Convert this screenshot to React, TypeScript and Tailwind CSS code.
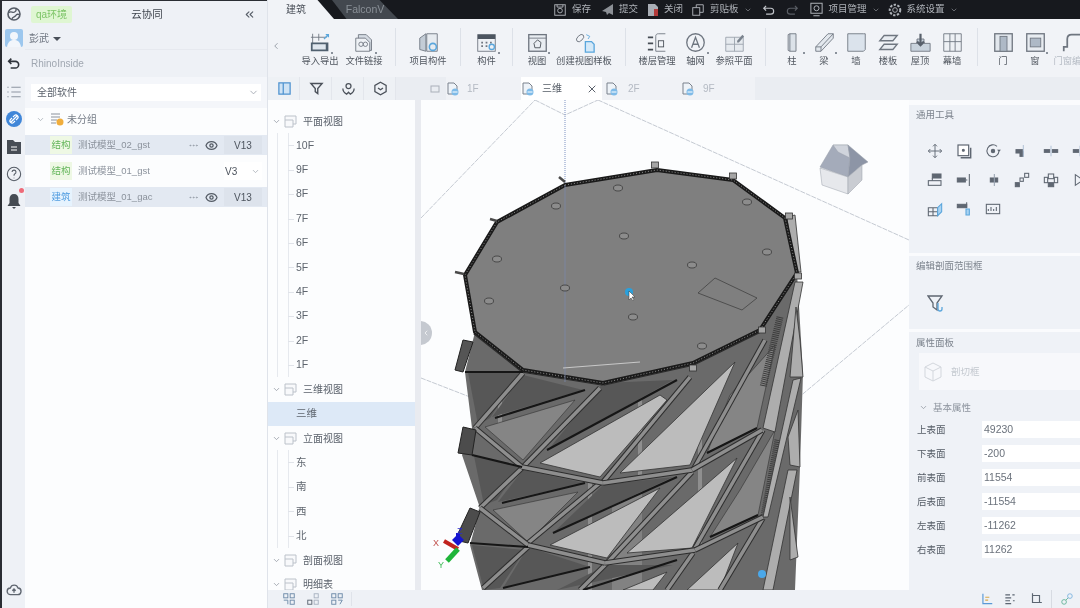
import React from "react";
import { ChevronDown, ChevronLeft, ChevronsLeft, Eye, MoreHorizontal, X } from "lucide-react";

const Ico = ({ s = 16, children, className = "" }: { s?: number; children: React.ReactNode; className?: string }) => (
  <svg width={s} height={s} viewBox="0 0 24 24" fill="none" stroke="currentColor" strokeWidth="1.6" className={className}>
    {children}
  </svg>
);

const BLUE = "#5aa6dc";

const railIcons: { y: number; el: React.ReactNode }[] = [
  { y: 5, el: <Ico className="text-[#555c66]"><circle cx="12" cy="12" r="9" strokeWidth="2.4" /><path d="M4 10c4-3 6 1 9-1s2-5 2-5M9 20c0-4 5-3 6-6s5-1 5-1" strokeWidth="2" /></Ico> },
  {
    y: 28,
    el: (
      <svg width="18" height="18" viewBox="0 0 18 18">
        <rect width="18" height="18" rx="2" fill="#9cc7ee" />
        <circle cx="9" cy="7" r="4" fill="#f2f6fb" />
        <path d="M2 18c1-6 4-7 7-7s6 1 7 7z" fill="#f2f6fb" />
      </svg>
    ),
  },
  { y: 55, el: <Ico className="text-[#2f343b]"><path d="M8 4 4 8l4 4M4 8h10a5 5 0 0 1 0 10H7" strokeWidth="2.4" /></Ico> },
  { y: 83, el: <Ico className="text-[#8d95a1]"><path d="M8 5h14M8 12h14M8 19h14M2 5h2M2 12h2M2 19h2" /></Ico> },
  {
    y: 110,
    el: (
      <svg width="16" height="16" viewBox="0 0 16 16">
        <circle cx="8" cy="8" r="8" fill="#3f86d8" />
        <path d="M5 11l6-6M6 7 4.600 8.400a2 2 0 0 0 3 3L9 10M7 6l1.400-1.400a2 2 0 0 1 3 3L10 9" stroke="#fff" fill="none" strokeWidth="1.200" />
      </svg>
    ),
  },
  {
    y: 138,
    el: (
      <svg width="16" height="16" viewBox="0 0 16 16">
        <path d="M1 1h6l2 2h6v12H1z" fill="#474d55" />
        <path d="M5 8h6M5 11h6" stroke="#fff" />
      </svg>
    ),
  },
  { y: 165, el: <Ico className="text-[#555c66]"><circle cx="12" cy="12" r="10" /><path d="M9 9a3 3 0 1 1 4 3c-1 .6-1 1-1 2.500M12 17.500v1" /></Ico> },
  {
    y: 192,
    el: (
      <span className="relative block">
        <svg width="16" height="16" viewBox="0 0 16 16">
          <path d="M8 1c3 0 4.500 2 4.500 5v4l2 3h-13l2-3V6C3.500 3 5 1 8 1zM6 14h4l-2 2z" fill="#454b53" />
        </svg>
        <span className="absolute -right-[2px] -top-[5px] h-[5px] w-[5px] rounded-full bg-[#ee6a78]" />
      </span>
    ),
  },
];

const Rail = () => (
  <div className="relative h-full w-[25px] shrink-0 border-l-2 border-t border-[#2a2d33] bg-[#eef1f6]">
    {railIcons.map((r, i) => (
      <div key={i} className="flex justify-center" style={{ position: "absolute", top: r.y, left: 0, right: 0 }}>
        {r.el}
      </div>
    ))}
    <div className="absolute bottom-[10px] left-0 right-0 flex justify-center text-[#5f6670]">
      <Ico>
        <path d="M7 19a5 5 0 0 1-.5-10A6 6 0 0 1 18 9a5 5 0 0 1-1 10z" strokeWidth="2" />
        <path d="M12 16v-5M9.500 13l2.500-2.500 2.500 2.500" strokeWidth="2" />
      </Ico>
    </div>
  </div>
);

const ModelRow = ({ tag, name, selected, ver, blue }: { tag: string; name: string; selected?: boolean; ver: string; blue?: boolean }) => (
  <div className={`flex h-[20px] items-center pl-[25px] pr-[5px] text-[9.500px] ${selected ? "bg-[#e3e9f2]" : ""}`}>
    <span className={`flex h-[18px] w-[22px] items-center justify-center ${blue ? "bg-[#e6f3fe] text-[#4f9ce0]" : "bg-[#eef8e4] text-[#63b55a]"}`}>{tag}</span>
    <span className="ml-[6px] text-[#8b929c]">{name}</span>
    <div className="flex-1" />
    {selected ? (
      <>
        <MoreHorizontal size={11} className="text-[#98a0ab]" />
        <Eye size={13} strokeWidth={2.4} className="ml-[6px] text-[#555c66]" />
        <span className="ml-[6px] flex h-[18px] w-[38px] items-center justify-center bg-[#dde3ec] text-[10px] text-[#4d545e]">{ver}</span>
      </>
    ) : (
      <span className="flex h-[18px] w-[38px] items-center justify-between bg-white pl-[1px] pr-[2px] text-[10px] text-[#4d545e]">
        {ver}
        <ChevronDown size={9} className="text-[#a3a9b2]" />
      </span>
    )}
  </div>
);

const LeftPanel = () => (
  <div className="flex h-full w-[243px] shrink-0 flex-col border-r border-[#dfe3ea] bg-[#fcfdfe] text-[10px]">
    <div className="border-t border-[#2a2d33] bg-[#eef1f6]">
      <div className="flex h-[27px] items-center pl-[6px] pr-[11px]">
        <span className="flex h-[17px] w-[41px] items-center justify-center rounded-[2px] bg-[#dff6d2] text-[#7cc466]">qa环境</span>
        <span className="flex-1 pr-[21px] text-center text-[10.500px] text-[#3f454e]">云协同</span>
        <ChevronsLeft size={13} className="text-[#565d67]" />
      </div>
      <div className="flex h-[21px] items-center gap-[4px] pl-[4px] text-[#6e7580]">
        彭武
        <span className="h-0 w-0 border-x-[4px] border-t-[4px] border-x-transparent border-t-[#4a5059]" />
      </div>
      <div className="flex h-[28px] items-center border-t border-[#e6e9ef] pl-[6px] text-[#a0a7b1]">RhinoInside</div>
    </div>
    <div className="bg-[#f4f6fa] px-[6px] py-[7px]">
      <div className="flex h-[17px] items-center justify-between bg-white pl-[6px] pr-[2px] text-[#5d646e]">
        全部软件
        <ChevronDown size={11} className="text-[#a3a9b2]" />
      </div>
    </div>
    <div className="flex h-[27px] items-center pb-[5px] pl-[11px] text-[10px] text-[#767d88]">
      <ChevronDown size={9} className="text-[#a3a9b2]" />
      <svg width="14" height="14" viewBox="0 0 14 14" className="ml-[5px]">
        <path d="M1 2h9M1 5h9M1 8h6M1 11h5" stroke="#8b929c" />
        <circle cx="10" cy="10" r="3.500" fill="#f0ad3c" />
      </svg>
      <span className="ml-[3px]">未分组</span>
    </div>
    <ModelRow tag="结构" name="测试模型_02_gst" selected ver="V13" />
    <div className="h-[6px]" />
    <ModelRow tag="结构" name="测试模型_01_gst" ver="V3" />
    <div className="h-[6px]" />
    <ModelRow tag="建筑" name="测试模型_01_gac" selected blue ver="V13" />
  </div>
);

const RibbonIcon = ({ kind }: { kind: string }) => {
  const d = "#6f7680";
  const l = "#d5dbe3";
  const common = { width: 21, height: 21, viewBox: "0 0 24 24", fill: "none" as const };
  switch (kind) {
    case "cad":
      return (
        <svg {...common}>
          <path d="M3 2v12M1 6h18M10 2v8" stroke={d} />
          <path d="M16 8l5-5M18 3h3v3" stroke={BLUE} strokeWidth="1.500" />
          <rect x="1" y="12" width="20" height="10" fill="#50606f" />
          <rect x="3" y="14" width="15" height="6" fill="#dfe6ee" />
        </svg>
      );
    case "link":
      return (
        <svg {...common}>
          <path d="M5 3h9l6 6v12H5z" fill={l} stroke={d} />
          <path d="M2 7h11l5 5v10H2z" fill="#eef1f5" stroke={d} />
          <circle cx="8" cy="14" r="2.500" stroke={d} />
          <circle cx="13" cy="14" r="2.500" stroke={d} />
        </svg>
      );
    case "proj":
      return (
        <svg {...common}>
          <path d="M2 7 9 2v20l-7-2z" fill="#c3ccd6" stroke={d} />
          <path d="M10 2h12v20H10z" fill="#e7ebf0" stroke={d} />
          <circle cx="17" cy="17" r="4" stroke={BLUE} strokeWidth="1.800" />
        </svg>
      );
    case "comp":
      return (
        <svg {...common}>
          <rect x="2" y="3" width="20" height="19" fill="#eef1f5" stroke={d} />
          <rect x="2" y="3" width="20" height="5" fill="#4c5560" />
          <path d="M6 12h2M11 12h2M16 12h2M6 16h2M11 16h2" stroke={d} strokeWidth="2" />
          <circle cx="18" cy="17" r="3" stroke={BLUE} strokeWidth="1.500" />
        </svg>
      );
    case "view":
      return (
        <svg {...common}>
          <rect x="2" y="3" width="20" height="19" fill="#e9edf2" stroke={d} strokeWidth="1.500" />
          <path d="M2 7h20" stroke={d} />
          <path d="M8 13l4-4 4 3-1 6H9z" stroke="#474d55" />
        </svg>
      );
    case "tpl":
      return (
        <svg {...common}>
          <ellipse cx="7" cy="7" rx="5" ry="3" stroke={d} transform="rotate(-45 7 7)" />
          <path d="M13 11h7l3 3v9H13z" fill="#d5e9f8" stroke={BLUE} strokeWidth="1.500" />
          <path d="M14 3l4 2-2 3" stroke={BLUE} />
        </svg>
      );
    case "floor":
      return (
        <svg {...common}>
          <path d="M10 5c0-2 1-3 3-3h8M10 5v17h11" stroke={d} />
          <path d="M1 6h6M1 13h6M1 20h6" stroke="#474d55" strokeWidth="2" />
          <rect x="13" y="10" width="6" height="7" stroke="#474d55" />
        </svg>
      );
    case "axis":
      return (
        <svg {...common}>
          <circle cx="12" cy="12" r="10" stroke={d} strokeWidth="1.500" />
          <path d="M7.500 18 12 6l4.500 12M9 14h6" stroke={d} strokeWidth="1.500" />
        </svg>
      );
    case "ref":
      return (
        <svg {...common}>
          <path d="M2 6h20v16H2zM12 6v16M2 14h20" fill="#e6eaef" stroke="#99a1ac" />
          <path d="M15 10l6-7 2 2-6 7h-2z" fill="#7a828d" />
        </svg>
      );
    case "col":
      return (
        <svg {...common}>
          <path d="M7 3l2-1h7v20H9l-2-1z" fill="#dce2e9" stroke={d} />
          <path d="M9 2v20" stroke={d} />
        </svg>
      );
    case "beam":
      return (
        <svg {...common}>
          <path d="M2 17 16 2h6v5L8 22H2z" fill="#e3e8ee" stroke={d} />
          <path d="M2 17h6v5M8 17 22 2" stroke={d} />
        </svg>
      );
    case "wall":
      return (
        <svg {...common}>
          <path d="M2 2h18l2 0v18l-2 2H2z" fill="#dbe3ec" stroke={d} />
        </svg>
      );
    case "slab":
      return (
        <svg {...common}>
          <path d="M7 4h15l-5 6H2zM7 14h15l-5 6H2z" fill="#e8ecf1" stroke={d} strokeWidth="1.500" />
        </svg>
      );
    case "roof":
      return (
        <svg {...common}>
          <path d="M1 13h7v-5h8v5h7v9H1z" fill="#c9d3dd" stroke={d} />
          <path d="M12 2v13M8 11l4 4 4-4" stroke="#58606b" strokeWidth="2.500" />
        </svg>
      );
    case "curtain":
      return (
        <svg {...common}>
          <path d="M2 2h20v20H2zM9 2v20M15 2v20M2 11h20" fill="#eef1f5" stroke={d} />
        </svg>
      );
    case "door":
      return (
        <svg {...common}>
          <rect x="2" y="2" width="20" height="20" fill="#e2e7ed" stroke={d} strokeWidth="1.500" />
          <rect x="8" y="5" width="8" height="17" fill="#aeb9c6" stroke={d} />
        </svg>
      );
    case "win":
      return (
        <svg {...common}>
          <rect x="2" y="2" width="20" height="20" fill="#e8ecf1" stroke={d} strokeWidth="1.500" />
          <rect x="6" y="7" width="12" height="10" fill="#aeb9c6" stroke={d} />
        </svg>
      );
    default:
      return (
        <svg {...common}>
          <path d="M2 22v-5h4V8c0-4 3-5 5-5h12" stroke={d} strokeWidth="2" />
        </svg>
      );
  }
};

const ribbon: ({ sep: number; mr?: number } | { k: string; t: string; w: number; corner?: boolean; dim?: boolean })[] = [
  { k: "cad", t: "导入导出", w: 44, corner: true },
  { k: "link", t: "文件链接", w: 44, corner: true },
  { sep: 9 },
  { k: "proj", t: "项目构件", w: 64 },
  { sep: 0 },
  { k: "comp", t: "构件", w: 51, corner: true },
  { sep: 0 },
  { k: "view", t: "视图", w: 48, corner: true },
  { k: "tpl", t: "创建视图样板", w: 46 },
  { sep: 18 },
  { k: "floor", t: "楼层管理", w: 62 },
  { k: "axis", t: "轴网", w: 15, corner: true },
  { k: "ref", t: "参照平面", w: 62 },
  { sep: 0, mr: 10 },
  { k: "col", t: "柱", w: 32, corner: true },
  { k: "beam", t: "梁", w: 32, corner: true },
  { k: "wall", t: "墙", w: 32 },
  { k: "slab", t: "楼板", w: 32 },
  { k: "roof", t: "屋顶", w: 32 },
  { k: "curtain", t: "幕墙", w: 32 },
  { sep: 9, mr: 9 },
  { k: "door", t: "门", w: 32 },
  { k: "win", t: "窗", w: 32, corner: true },
  { k: "dw", t: "门窗编号", w: 42, dim: true },
];

const Ribbon = () => (
  <div className="flex h-[58px] items-start bg-[#f1f3f7]">
    <div className="flex w-[30px] shrink-0 justify-center pr-[14px] pt-[22px]">
      <ChevronLeft size={10} className="text-[#8a919b]" />
    </div>
    {ribbon.map((it, i) =>
      "sep" in it ? (
        <div key={i} className="mt-[9px] h-[38px] w-px shrink-0 bg-[#dde1e8]" style={{ marginLeft: it.sep, marginRight: it.mr ?? 0 }} />
      ) : (
        <div key={i} className="relative flex shrink-0 flex-col items-center whitespace-nowrap pt-[13px]" style={{ width: it.w }}>
          <RibbonIcon kind={it.k} />
          <span className={`mt-[1px] text-[9.300px] leading-[14px] ${it.dim ? "text-[#b5bbc4]" : "text-[#50565f]"}`}>{it.t}</span>
          {it.corner && <span className="absolute left-[calc(50%+11px)] top-[33px] h-[2px] w-[2px] bg-[#8a919b]" />}
        </div>
      ),
    )}
  </div>
);

const Menu = ({ ml, icon, t, arrow }: { ml: number; icon: React.ReactNode; t?: string; arrow?: boolean }) => (
  <div className="flex shrink-0 items-center gap-[5px] text-[9.500px] text-[#aeb2b8]" style={{ marginLeft: ml }}>
    {icon}
    {t && <span>{t}</span>}
    {arrow && <ChevronDown size={8} className="text-[#8c9096]" />}
  </div>
);

const TopBar = () => (
  <div className="flex h-[19px] items-center overflow-hidden bg-[#17191e]">
    <div className="flex h-[19px] w-[66px] shrink-0 items-center bg-[#f1f3f7] pl-[18px] text-[10px] text-[#4b515a] [clip-path:polygon(0_0,75%_0,100%_100%,0_100%)]">建筑</div>
    <div className="-ml-[2px] flex h-[19px] w-[66px] shrink-0 items-center justify-center bg-[#43484f] text-[10.500px] text-[#8a9097] [clip-path:polygon(0_0,72%_0,100%_100%,22%_100%)]">FalconV</div>
    <Menu ml={155} icon={<Ico s={14}><rect x="3" y="3" width="18" height="18" /><circle cx="12" cy="13" r="4" /><path d="M7 3v4h10V3" /></Ico>} t="保存" />
    <Menu ml={10} icon={<svg width="13" height="13" viewBox="0 0 13 13"><path d="M1 8 12 1v11L8 10 6 12 5 9z" fill="#8c9096" /></svg>} t="提交" />
    <Menu ml={9} icon={<svg width="12" height="14" viewBox="0 0 12 14"><path d="M1 1h7l3 3v9H1z" fill="#a8adb4" /><path d="M7 6h4v7H7z" fill="#b33b3b" /></svg>} t="关闭" />
    <Menu ml={8} icon={<Ico s={14}><rect x="3" y="8" width="12" height="13" /><path d="M9 8V3h12v13h-6" /></Ico>} t="剪贴板" arrow />
    <Menu ml={10} icon={<Ico s={14} className="text-[#c2c5ca]"><path d="M7 5 3 9l4 4M3 9h12a5 5 0 0 1 0 10H7" strokeWidth="2" /></Ico>} />
    <Menu ml={9} icon={<Ico s={14} className="text-[#5a5e65]"><path d="M17 5l4 4-4 4M21 9H9a5 5 0 0 0 0 10h8" strokeWidth="2" /></Ico>} />
    <Menu ml={10} icon={<Ico s={15}><rect x="3" y="2" width="18" height="16" /><circle cx="12" cy="10" r="4" /><path d="M7 22h10" /></Ico>} t="项目管理" arrow />
    <Menu ml={8} icon={<Ico s={14}><circle cx="12" cy="12" r="4" /><circle cx="12" cy="12" r="9" strokeDasharray="4 2.500" strokeWidth="3.500" /></Ico>} t="系统设置" arrow />
  </div>
);

const TabIcon = () => (
  <svg width="14" height="14" viewBox="0 0 14 14" className="shrink-0">
    <path d="M2 1h6l3 3v8H2z" fill="#eef3f8" stroke="#7a828d" />
    <circle cx="9" cy="10" r="3.500" fill="#7fbbe8" />
    <path d="M6.500 10h5" stroke="#fff" />
  </svg>
);

const viewTabs = [
  { t: "1F", w: 75, pl: 0, gap: 7 },
  { t: "三维", w: 81, pl: 0, gap: 7, active: true },
  { t: "2F", w: 73, pl: 3, gap: 9 },
  { t: "9F", w: 80, pl: 6, gap: 8 },
];

const TabRow = () => (
  <div className="flex h-[23px] bg-[#eaedf2]">
    <div className="flex w-[147px] shrink-0">
      {[
        <Ico s={15} className="text-[#4f93cf]" key="a"><rect x="3" y="3" width="18" height="18" fill="#cfe3f5" strokeWidth="2" /><path d="M10 3v18" strokeWidth="2" /></Ico>,
        <Ico s={15} className="text-[#4b515a]" key="b"><path d="M3 4h18l-7 8v8l-4-3v-5z" strokeWidth="2.200" /></Ico>,
        <Ico s={15} className="text-[#4b515a]" key="c"><circle cx="12" cy="8" r="4" strokeWidth="2" /><path d="M3 12c0 6 4 8 6 9l3-3 3 3c2-1 6-3 6-9" strokeWidth="2" /></Ico>,
        <Ico s={15} className="text-[#4b515a]" key="d"><path d="M12 2l9 5v10l-9 5-9-5V7z" strokeWidth="2" /><path d="M8 11l4 3 4-3" strokeWidth="2" /></Ico>,
      ].map((el, i) => (
        <div key={i} className="flex w-[32px] items-center justify-center border-r border-[#e3e6ec] bg-[#eef1f5] pl-[2px]">{el}</div>
      ))}
    </div>
    <div className="flex w-[6px] shrink-0" />
    <div className="flex w-[25px] shrink-0 items-center justify-center pl-[2px]">
      <svg width="10" height="10" viewBox="0 0 10 10"><rect x="1" y="2" width="8" height="6" fill="none" stroke="#aab0b9" /></svg>
    </div>
    {viewTabs.map((t) => (
      <div key={t.t} className={`flex h-[23px] shrink-0 items-center text-[10px] ${t.active ? "bg-white text-[#555c66]" : "bg-[#f0f2f6] text-[#b4bac3]"}`} style={{ width: t.w, paddingLeft: t.pl }}>
        <TabIcon />
        <span style={{ marginLeft: t.gap }}>{t.t}</span>
        {t.active && <X size={12} className="ml-auto mr-[4px] text-[#5a616b]" />}
      </div>
    ))}
    <div className="flex-1" />
  </div>
);

const floors = ["10F", "9F", "8F", "7F", "6F", "5F", "4F", "3F", "2F", "1F"];

const TreeGroup = ({ t }: { t: string }) => (
  <div className="relative flex h-[24.400px] items-center pl-[4px] text-[10px] text-[#5b626c]">
    <ChevronDown size={9} className="text-[#8f96a0]" />
    <svg width="13" height="13" viewBox="0 0 13 13" className="ml-[3px] shrink-0">
      <path d="M1 1h11v8H9v3H1zM1 5h8v4" fill="#f8f9fb" stroke="#bcc2ca" />
    </svg>
    <span className="ml-[6px]">{t}</span>
  </div>
);

const TreeLeaf = ({ t, selected }: { t: string; selected?: boolean }) => (
  <div className={`relative flex h-[24.400px] items-center pl-[28px] text-[10.500px] text-[#5f666f] ${selected ? "bg-[#dde9f7]" : ""}`}>
    {!selected && <span className="absolute bottom-0 left-[9px] top-0 w-px bg-[#e6e9ee]" />}
    {!selected && <span className="absolute bottom-0 left-[20px] top-0 w-px bg-[#e6e9ee]" />}
    {!selected && <span className="absolute left-[20px] top-[12px] h-px w-[6px] bg-[#e0e3e9]" />}
    {t}
  </div>
);

const Tree = () => (
  <div className="relative h-full w-[147px] shrink-0 overflow-hidden bg-[#fcfdfe] pt-[9px]">
    <TreeGroup t="平面视图" />
    {floors.map((f) => <TreeLeaf key={f} t={f} />)}
    <TreeGroup t="三维视图" />
    <TreeLeaf t="三维" selected />
    <TreeGroup t="立面视图" />
    {["东", "南", "西", "北"].map((f) => <TreeLeaf key={f} t={f} />)}
    <TreeGroup t="剖面视图" />
    <TreeGroup t="明细表" />
  </div>
);

const tops = "565,185 657,170 733,180 785,218 797,273 760,330 693,363 603,383 523,370 475,332 465,275 497,222";
const holes: [number, number][] = [[618, 188], [556, 206], [624, 236], [497, 259], [489, 301], [565, 288], [692, 265], [767, 252], [633, 317], [702, 346], [747, 202]];
const light = [
  "540,463 660,395 667,400 600,477",
  "620,473 735,362 690,465",
  "550,545 660,488 607,558",
  "627,553 737,458 692,548",
  "687,590 738,543 720,590",
  "623,590 667,572 653,590",
];
const mid = [
  "485,427 575,400 523,460",
  "493,510 578,492 528,542",
  "707,453 757,428 775,345 730,395",
  "710,537 758,515 775,430 740,490",
];
const darkPanels = [
  "492,417 583,390 523,375",
  "498,502 585,483 523,470",
  "503,588 590,567 528,547",
  "548,450 673,380 603,383",
  "553,533 673,477 603,485",
  "557,590 673,565 607,565",
  "468,372 520,372 490,418 478,425",
  "474,456 520,467 497,500 484,505",
  "472,545 525,550 500,588 484,590",
];
const struts: [number, number, number, number][] = [
  [475, 428, 523, 373], [523, 467, 600, 388], [603, 482, 690, 377], [693, 470, 765, 340],
  [480, 508, 522, 468], [528, 543, 600, 483], [607, 563, 692, 472], [695, 548, 763, 430],
  [483, 588, 528, 547], [580, 590, 607, 563], [667, 590, 693, 553], [720, 590, 763, 518],
  [475, 332, 523, 370], [523, 370, 603, 383], [603, 383, 693, 363], [693, 363, 760, 330],
  [475, 428, 522, 467], [522, 467, 603, 483], [603, 483, 692, 470], [692, 470, 762, 430],
  [480, 508, 528, 545], [528, 545, 605, 563], [605, 563, 695, 550], [695, 550, 763, 517],
];
const blacks: [number, number, number, number][] = [
  [495, 418, 585, 390], [502, 503, 585, 483], [503, 588, 590, 567], [547, 450, 677, 380],
  [553, 533, 677, 477], [465, 372, 523, 372], [472, 455, 522, 467], [470, 543, 528, 547],
  [707, 453, 757, 428], [710, 537, 758, 515], [583, 590, 677, 560],
];
const strips = [
  "787,217 795,215 801,272 793,272",
  "795,282 803,282 775,432 763,428",
  "796,307 800,340 803,377 790,377",
  "793,380 801,378 768,517 763,517",
  "798,410 800,467 790,465 788,437",
  "788,470 797,470 773,590 763,590",
  "790,497 798,557 790,560",
];
const knobs: [number, number][] = [[655, 165], [733, 176], [789, 216], [798, 276], [762, 330], [693, 368]];
const prongs: [number, number, number, number][] = [[565, 182, 559, 177], [497, 221, 490, 219], [464, 274, 455, 272]];

const Model = () => (
  <svg viewBox="421 100 488 490" className="absolute inset-0 h-full w-full">
    <g stroke="#b6bcc6" strokeWidth="0.800" fill="none">
      <path d="M421 218 535 100M598 100 909 240M535 100 565 115 598 100M421 378 470 397M798 398 909 305" strokeDasharray="5 1" />
    </g>
    <path d="M565 100V590" stroke="#7f93c2" strokeWidth="1" strokeDasharray="1 1" />
    <polygon points="465,372 472,428 462,455 480,508 470,545 482,590 795,590 800,467 803,373 797,273 760,330 693,363 603,383 523,370 475,332" fill="#6a6a6a" />
    <path d="M640 400v80M700 400v150M590 480v110M500 400v30" stroke="#a8a8a8" strokeWidth="4" opacity="0.6" />
    <rect x="612" y="490" width="30" height="100" fill="#9a9a9a" opacity="0.5" />
    {darkPanels.map((p) => <polygon key={p} points={p} fill="#575757" />)}
    {mid.map((p) => <polygon key={p} points={p} fill="#858585" stroke="#333" strokeWidth="0.600" />)}
    {light.map((p) => <polygon key={p} points={p} fill="#bcbcbc" stroke="#333" strokeWidth="0.800" strokeLinejoin="round" />)}
    {struts.map(([a, b, c, d], i) => (
      <g key={i}>
        <line x1={a} y1={b} x2={c} y2={d} stroke="#2d2d2d" strokeWidth="5.500" />
        <line x1={a} y1={b} x2={c} y2={d} stroke="#8e8e8e" strokeWidth="3.500" />
      </g>
    ))}
    {blacks.map(([a, b, c, d], i) => <line key={i} x1={a} y1={b} x2={c} y2={d} stroke="#161616" strokeWidth="2" />)}
    <polygon points="455,370 463,340 473,342 463,372" fill="#555" stroke="#222" />
    <polygon points="458,453 463,427 476,430 472,455" fill="#4c4c4c" stroke="#222" />
    <polygon points="455,540 470,508 480,512 468,543" fill="#4c4c4c" stroke="#222" />
    <path d="M780 317 763 387M778 440 764 516" stroke="#3d3d3d" strokeWidth="7" strokeDasharray="1 1" fill="none" />
    {strips.map((p) => <polygon key={p} points={p} fill="#adadad" stroke="#333" strokeWidth="0.800" />)}
    <polygon points={tops} fill="#7f7f7f" stroke="#1a1a1a" strokeWidth="4" strokeLinejoin="round" />
    <polygon points={tops} fill="none" stroke="#8c8c8c" strokeWidth="1" strokeDasharray="1 2" />
    <path d="M565 185V382" stroke="#7b88a8" strokeWidth="0.800" />
    <path d="M563 368 640 362" stroke="#c8c8c8" strokeWidth="1.200" />
    {knobs.map(([x, y]) => <rect key={x} x={x - 3.500} y={y - 3} width="7" height="6" fill="#a5a5a5" stroke="#333" strokeWidth="0.800" />)}
    {prongs.map(([a, b, c, d]) => <line key={a} x1={a} y1={b} x2={c} y2={d} stroke="#4a4a4a" strokeWidth="2.500" />)}
    {holes.map(([x, y]) => <ellipse key={x} cx={x} cy={y} rx="4.500" ry="3" fill="#8c8c8c" stroke="#2f2f2f" strokeWidth="0.700" />)}
    <polygon points="715,278 757,298 742,310 698,293" fill="none" stroke="#3a3a3a" strokeWidth="0.700" />
    <circle cx="629" cy="292" r="4" fill="#2aa0dc" />
    <path d="M629 291v9l2-2 2 3 1-1-2-3h3z" fill="#fff" stroke="#333" strokeWidth="0.500" />
    <circle cx="762" cy="574" r="4" fill="#4aa8ea" />
    <path d="M458 540v-7" stroke="#1414d0" strokeWidth="4" />
    <path d="M452 540l6-6 6 6-6 6z" fill="#1414d0" />
    <path d="M458 549 444 541" stroke="#c0231e" strokeWidth="4" />
    <path d="M458 549 447 561" stroke="#1fb53a" strokeWidth="5" />
    <text x="433" y="546" fontSize="9" fill="#c0504c">X</text>
    <text x="438" y="568" fontSize="9" fill="#3fbb58">Y</text>
    <text x="457" y="534" fontSize="9" fill="#2a2ad0">Z</text>
    <g strokeWidth="0.500" stroke="#9aa0aa">
      <polygon points="820,167 833,145 848,145 850,158 848,177" fill="#a4abba" />
      <polygon points="833,145 848,145 850,158 838,152" fill="#d0d4dc" />
      <polygon points="848,145 868,162 862,165 848,177 850,158" fill="#8d95a6" />
      <polygon points="820,168 848,177 848,194 822,185" fill="#e6e8ec" />
      <polygon points="848,177 862,165 862,180 848,194" fill="#c9ccd2" />
    </g>
  </svg>
);

const Canvas = () => (
  <div className="relative h-full flex-1 overflow-hidden bg-[#fcfdfe]">
    <Model />
    <span className="absolute -left-[1px] top-[221px] flex h-[24px] w-[12px] items-center justify-center rounded-r-full bg-[#c5c9d0]">
      <ChevronLeft size={8} className="text-white" />
    </span>
  </div>
);

const toolIcons: React.ReactNode[] = [
  <Ico key="0"><path d="M12 2v20M2 12h20M9 5l3-3 3 3M9 19l3 3 3-3M5 9l-3 3 3 3M19 9l3 3-3 3" strokeWidth="1.400" /></Ico>,
  <Ico key="1"><rect x="3" y="3" width="16" height="16" fill="#fff" strokeWidth="1.800" /><path d="M22 7v15H7" strokeWidth="2.200" /><circle cx="11" cy="11" r="1.500" fill="currentColor" /></Ico>,
  <Ico key="2"><path d="M21 12a9 9 0 1 1-3-7" /><path d="M21 12l-2-2M21 12l2-2" /><circle cx="12" cy="12" r="2.500" fill="currentColor" /></Ico>,
  <Ico key="3"><rect x="3" y="10" width="10" height="5" fill="currentColor" /><rect x="9" y="13" width="5" height="7" fill="currentColor" /><path d="M14 3v18" stroke="#b4c4d8" /></Ico>,
  <Ico key="4"><rect x="2" y="10" width="8" height="4" fill="currentColor" /><rect x="14" y="10" width="8" height="4" fill="currentColor" /><path d="M12 4v16" stroke="#b4c4d8" /></Ico>,
  <Ico key="5"><rect x="2" y="10" width="8" height="4" fill="currentColor" /><path d="M12 4v16" stroke="#b4c4d8" /></Ico>,
  <Ico key="6"><rect x="8" y="3" width="13" height="6" fill="currentColor" /><rect x="2" y="13" width="19" height="7" /><path d="M8 9v4" /></Ico>,
  <Ico key="7"><rect x="2" y="9" width="12" height="6" fill="currentColor" /><path d="M20 3v18M15 12h2" /></Ico>,
  <Ico key="8"><rect x="8" y="9" width="11" height="6" fill="currentColor" /><path d="M14 3v18" stroke="#99a4b2" /></Ico>,
  <Ico key="9"><rect x="2" y="16" width="6" height="6" fill="currentColor" /><rect x="9" y="9" width="5" height="5" /><rect x="16" y="2" width="6" height="6" /></Ico>,
  <Ico key="10"><rect x="8" y="3" width="8" height="7" /><rect x="8" y="16" width="8" height="6" fill="currentColor" /><rect x="2" y="8" width="5" height="8" /><rect x="17" y="8" width="5" height="8" /></Ico>,
  <Ico key="11"><path d="M5 4l12 8-12 8z" /></Ico>,
  <Ico key="12"><path d="M2 10h14v12H2zM2 16h14M9 10v12" /><path d="M16 10l6-6v12l-6 6z" fill="#a9d3f2" stroke={BLUE} /></Ico>,
  <Ico key="13"><rect x="2" y="5" width="14" height="5" fill="currentColor" /><path d="M16 2v8" /><path d="M15 12h5v9h-5z" fill="#a9d3f2" stroke={BLUE} /></Ico>,
  <Ico key="14"><rect x="2" y="5" width="20" height="14" /><path d="M5 15v-3M9 15V9M13 15v-3M17 15V9" /></Ico>,
];

const props = [
  ["上表面", "49230"],
  ["下表面", "-200"],
  ["前表面", "11554"],
  ["后表面", "-11554"],
  ["左表面", "-11262"],
  ["右表面", "11262"],
];

const RightPanel = () => (
  <div className="flex h-full w-[171px] shrink-0 flex-col gap-[3px] overflow-hidden bg-[#fafbfd] pt-[5px] text-[9.500px] text-[#7d848e]">
    <div className="h-[148px] bg-[#eff2f7] pl-[7px] pt-[3px]">
      <div>通用工具</div>
      <div className="mt-[21px] grid w-[174px] grid-cols-6 gap-y-[13px] text-[#5f6772]">
        {toolIcons.map((ic, i) => <div key={i} className="flex h-[16px] w-[29px] justify-start pl-[11px]">{ic}</div>)}
      </div>
    </div>
    <div className="h-[73px] bg-[#eff2f7] pl-[7px] pt-[3px]">
      <div>编辑剖面范围框</div>
      <div className="mt-[21px] pl-[11px]">
        <svg width="18" height="18" viewBox="0 0 18 18" fill="none">
          <path d="M1 2h14L10 9v7L6 13V9z" stroke="#5f6772" strokeWidth="1.300" />
          <path d="M11 9v6a2 2 0 0 0 4 0v-2" stroke={BLUE} strokeWidth="1.300" />
        </svg>
      </div>
    </div>
    <div className="flex-1 bg-[#eff2f7] pl-[7px] pt-[4px]">
      <div>属性面板</div>
      <div className="ml-[3px] mt-[3px] flex h-[37px] items-center bg-[#f7f8fb] pl-[4px] text-[#c3c8cf]">
        <svg width="20" height="20" viewBox="0 0 20 20" fill="none" stroke="#d3d7dd">
          <path d="M10 1l8 4v10l-8 4-8-4V5zM2 5l8 4 8-4M10 9v10" />
        </svg>
        <span className="ml-[8px]">剖切框</span>
      </div>
      <div className="mt-[9px] flex h-[17px] items-center pl-[3px] text-[#8d949e]">
        <ChevronDown size={9} />
        <span className="ml-[5px]">基本属性</span>
      </div>
      <div className="mt-[5px] flex flex-col gap-[7px]">
        {props.map(([l, v]) => (
          <div key={l} className="flex h-[17px] items-center text-[#555c66]">
            <span className="w-[66px] pl-[1px]">{l}</span>
            <span className="flex h-[17px] flex-1 items-center bg-white pl-[2px] text-[10.500px] text-[#6b727c]">{v}</span>
          </div>
        ))}
      </div>
    </div>
  </div>
);

const BottomBar = () => (
  <div className="flex h-[18px] items-center bg-[#eef1f6]">
    <div className="flex w-[84px] shrink-0 items-center gap-[10px] border-r border-[#dfe3ea] pl-[14px] text-[#6d8aa8]">
      <Ico s={14}><rect x="3" y="3" width="7" height="7" /><rect x="14" y="3" width="7" height="7" /><rect x="14" y="14" width="7" height="7" /><path d="M3 14h7v7" /></Ico>
      <Ico s={14} className="text-[#a9b3c0]"><rect x="3" y="14" width="7" height="7" stroke="#5c6672" /><rect x="14" y="3" width="7" height="7" /><rect x="14" y="14" width="7" height="7" /></Ico>
      <Ico s={14}><rect x="3" y="3" width="7" height="7" /><rect x="14" y="3" width="7" height="7" /><rect x="3" y="14" width="7" height="7" /><path d="M14 14h7l-4 7" /></Ico>
    </div>
    <div className="flex-1" />
    <div className="flex w-[108px] shrink-0 items-center pl-[8px]">
      <Ico s={14} className="text-[#5c6672]"><path d="M5 3v17h16" stroke="#5a9ad6" strokeWidth="2" /><path d="M9 9h7M9 14h5" stroke="#d6a94a" strokeWidth="2" /></Ico>
      <Ico s={14} className="ml-[9px] text-[#5c6672]"><path d="M4 5h8M4 10h10M4 15h8M4 20h10M16 5h4M17 15h3" strokeWidth="2" /></Ico>
      <Ico s={14} className="ml-[12px] text-[#5c6672]"><path d="M6 2v16h16M6 6h12v12" strokeWidth="2" /></Ico>
      <span className="ml-[8px] h-[18px] w-px bg-[#d7dbe2]" />
      <Ico s={14} className="ml-[8px] text-[#66b59a]"><circle cx="7" cy="17" r="4" /><circle cx="17" cy="7" r="4" stroke="#7fb5e0" /><path d="M10 14l4-4" /></Ico>
    </div>
  </div>
);

export default function App() {
  return (
    <div className="flex h-[608px] w-[1080px] overflow-hidden bg-white font-['Liberation_Sans','Noto_Sans_CJK_SC',sans-serif] blur-[0.4px]">
      <Rail />
      <LeftPanel />
      <div className="flex h-full min-w-0 flex-1 flex-col">
        <TopBar />
        <Ribbon />
        <TabRow />
        <div className="flex min-h-0 flex-1">
          <Tree />
          <div className="h-full w-[6px] shrink-0 bg-[#e9ebf0]" />
          <Canvas />
          <RightPanel />
        </div>
        <BottomBar />
      </div>
    </div>
  );
}
